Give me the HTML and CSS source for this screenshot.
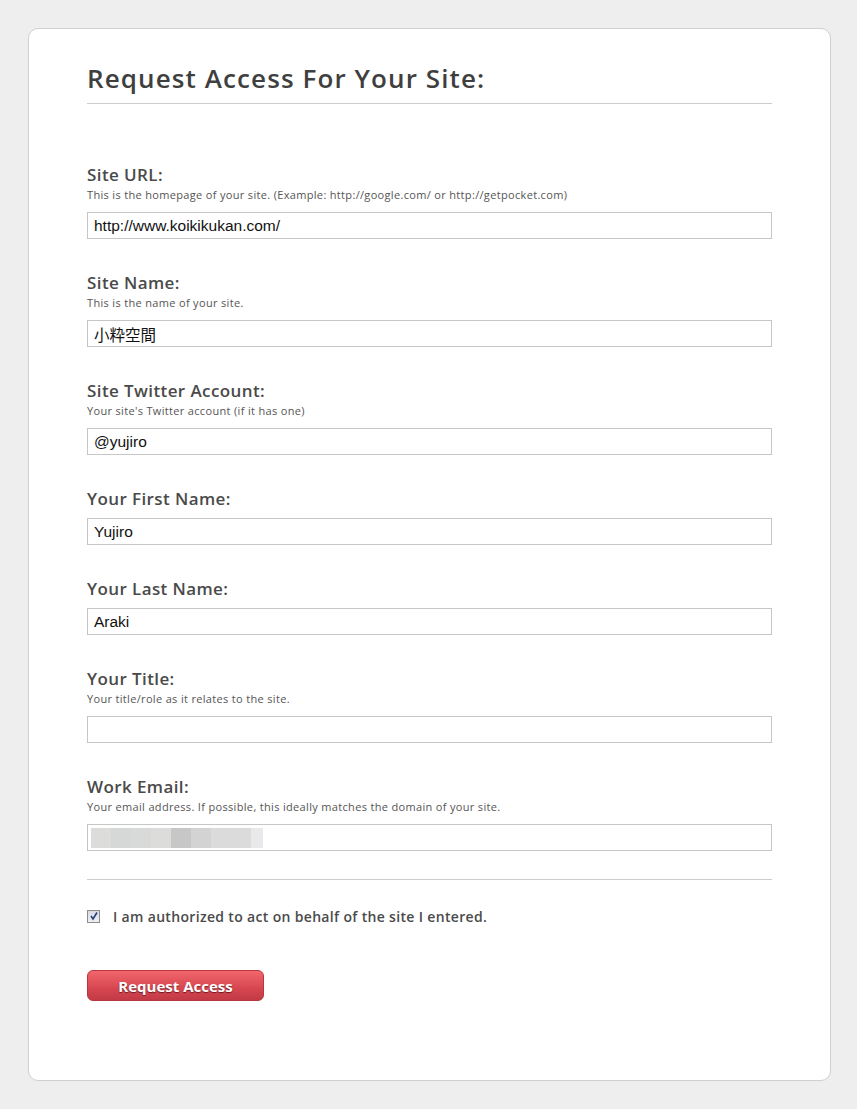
FILE: index.html
```html
<!DOCTYPE html>
<html lang="en">
<head>
    <meta charset="UTF-8">
    <meta name="viewport" content="width=device-width, initial-scale=1.0">
    <title>Request Access</title>
    <link rel="stylesheet" href="styles.css">
</head>
<body>
    <div class="card">
        <h1 class="title">Request Access For Your Site:</h1>

        <!-- Formulario de solicitud -->
        <form class="access-form">
            <div class="field">
                <label class="field-label" for="siteUrl">Site URL:</label>
                <p class="field-hint">This is the homepage of your site. (Example: http://google.com/ or http://getpocket.com)</p>
                <input class="field-input" type="text" id="siteUrl" value="http://www.koikikukan.com/">
            </div>

            <div class="field">
                <label class="field-label" for="siteName">Site Name:</label>
                <p class="field-hint">This is the name of your site.</p>
                <input class="field-input" type="text" id="siteName" value="小粋空間">
            </div>

            <div class="field">
                <label class="field-label" for="siteTwitter">Site Twitter Account:</label>
                <p class="field-hint">Your site's Twitter account (if it has one)</p>
                <input class="field-input" type="text" id="siteTwitter" value="@yujiro">
            </div>

            <div class="field">
                <label class="field-label" for="firstName">Your First Name:</label>
                <input class="field-input" type="text" id="firstName" value="Yujiro">
            </div>

            <div class="field">
                <label class="field-label" for="lastName">Your Last Name:</label>
                <input class="field-input" type="text" id="lastName" value="Araki">
            </div>

            <div class="field">
                <label class="field-label" for="title">Your Title:</label>
                <p class="field-hint">Your title/role as it relates to the site.</p>
                <input class="field-input" type="text" id="title" value="">
            </div>

            <div class="field field-last">
                <label class="field-label">Work Email:</label>
                <p class="field-hint">Your email address. If possible, this ideally matches the domain of your site.</p>
                <div class="field-input masked">
                    <span class="px" style="background:#dcdcda;width:20px"></span>
                    <span class="px" style="background:#d6d8d7;width:20px"></span>
                    <span class="px" style="background:#d8d9d9;width:20px"></span>
                    <span class="px" style="background:#dcdcda;width:20px"></span>
                    <span class="px" style="background:#c7c7c7;width:20px"></span>
                    <span class="px" style="background:#d3d3d3;width:20px"></span>
                    <span class="px" style="background:#dbdbdb;width:40px"></span>
                    <span class="px" style="background:#e9e9ec;width:12px"></span>
                </div>
            </div>

            <hr class="divider">

            <label class="agree">
                <span class="check">
                    <svg width="10" height="10" viewBox="0 0 10 10"><path d="M2 5 L4 8 L8 1.5" fill="none" stroke="#2b3f7a" stroke-width="1.6"/></svg>
                </span>
                I am authorized to act on behalf of the site I entered.
            </label>

            <button class="submit-btn" type="button">Request Access</button>
        </form>
    </div>
</body>
</html>
```

FILE: styles.css
```css
body {
    margin: 0;
    padding: 28px 0;
    background-color: #eeeeee;
    font-family: 'Open Sans', 'Lato', sans-serif;
}
.card {
    width: 685px;
    margin-left: 28px;
    padding: 0 58px 79px 58px;
    background-color: #fff;
    border: 1px solid #cfcfcf;
    border-radius: 10px;
}
.title {
    margin: 33px 0 0;
    padding-bottom: 9px;
    font-size: 26px;
    line-height: 32px;
    font-weight: 600;
    letter-spacing: 1.1px;
    color: #3f3f3f;
    border-bottom: 1px solid #cccccc;
}
.access-form {
    margin-top: 60px;
}
.field {
    margin-bottom: 33px;
}
.field-last {
    margin-bottom: 0;
}
.field-label {
    display: block;
    height: 22px;
    font-size: 17px;
    line-height: 22px;
    font-weight: 600;
    letter-spacing: 0.4px;
    color: #4a4a4a;
}
.field-hint {
    margin: 0;
    height: 18px;
    font-size: 11px;
    line-height: 18px;
    letter-spacing: 0.33px;
    color: #555;
}
.field-input {
    display: block;
    box-sizing: border-box;
    width: 100%;
    height: 27px;
    margin: 8px 0 0;
    padding: 0 6px;
    border: 1px solid #c6c6c6;
    font-family: 'Liberation Sans', 'Noto Sans CJK JP', sans-serif;
    font-size: 15.5px;
    color: #111;
    background: #fff;
    outline: none;
}
.masked {
    display: flex;
    align-items: center;
    padding: 0 3px;
}
.px {
    display: block;
    height: 20px;
}
.divider {
    margin: 28px 0 0;
    border: none;
    border-top: 1px solid #cccccc;
}
.agree {
    display: flex;
    align-items: center;
    gap: 13px;
    height: 20px;
    margin-top: 26px;
    font-size: 14px;
    font-weight: 600;
    letter-spacing: 0.33px;
    color: #4a4a4a;
}
.check {
    display: flex;
    align-items: center;
    justify-content: center;
    box-sizing: border-box;
    width: 13px;
    height: 13px;
    border: 1px solid #8c8c8c;
    background: linear-gradient(#d8dbe4, #eef0f5);
}
.submit-btn {
    display: block;
    width: 177px;
    height: 31px;
    margin-top: 44px;
    border: 1px solid #b8363f;
    border-radius: 6px;
    background: linear-gradient(#f2666c, #d64650 60%, #c23a45);
    color: #fff;
    font-family: 'Open Sans', sans-serif;
    font-size: 15px;
    font-weight: bold;
    text-shadow: 0 1px 1px #6b1a20;
    cursor: pointer;
}
```
